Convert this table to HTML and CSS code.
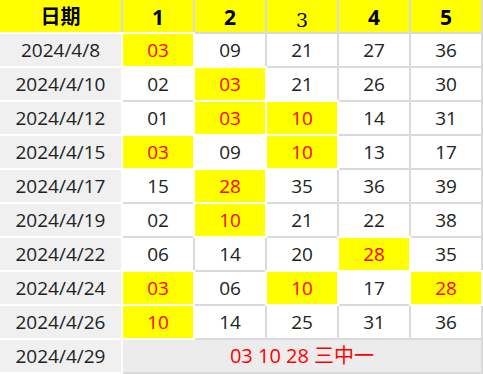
FILE: index.html
```html
<!DOCTYPE html>
<html lang="zh">
<head>
<meta charset="utf-8">
<title>号码记录</title>
<link rel="stylesheet" href="styles.css">
</head>
<body>
<div class="sheet">
  <div class="hd hd-date">日期</div>
  <div class="hd">1</div>
  <div class="hd">2</div>
  <div class="hd hd-odd">3</div>
  <div class="hd">4</div>
  <div class="hd">5</div>

  <div class="date">2024/4/8</div>
  <div class="c hit">03</div><div class="c">09</div><div class="c">21</div><div class="c">27</div><div class="c">36</div>

  <div class="date">2024/4/10</div>
  <div class="c">02</div><div class="c hit">03</div><div class="c">21</div><div class="c">26</div><div class="c">30</div>

  <div class="date">2024/4/12</div>
  <div class="c">01</div><div class="c hit">03</div><div class="c hit">10</div><div class="c">14</div><div class="c">31</div>

  <div class="date">2024/4/15</div>
  <div class="c hit">03</div><div class="c">09</div><div class="c hit">10</div><div class="c">13</div><div class="c">17</div>

  <div class="date">2024/4/17</div>
  <div class="c">15</div><div class="c hit">28</div><div class="c">35</div><div class="c">36</div><div class="c">39</div>

  <div class="date">2024/4/19</div>
  <div class="c">02</div><div class="c hit">10</div><div class="c">21</div><div class="c">22</div><div class="c">38</div>

  <div class="date">2024/4/22</div>
  <div class="c">06</div><div class="c">14</div><div class="c">20</div><div class="c hit">28</div><div class="c">35</div>

  <div class="date">2024/4/24</div>
  <div class="c hit">03</div><div class="c">06</div><div class="c hit">10</div><div class="c">17</div><div class="c hit">28</div>

  <div class="date">2024/4/26</div>
  <div class="c hit">10</div><div class="c">14</div><div class="c">25</div><div class="c">31</div><div class="c">36</div>

  <div class="date">2024/4/29</div>
  <div class="result">03 10 28 三中一</div>
</div>
</body>
</html>
```

FILE: styles.css
```css
html, body {
  margin: 0;
  padding: 0;
  background: #ffffff;
}

.sheet {
  display: grid;
  grid-template-columns: 121px repeat(5, 70px);
  grid-template-rows: repeat(11, 32px);
  gap: 2px;
  padding: 0 2px 2px 0;
  width: 483px;
  box-sizing: border-box;
  background: #dadada;
  font-family: "Open Sans", "Noto Sans CJK SC", sans-serif;
  font-size: 19px;
  color: #222222;
}

.sheet > div {
  display: flex;
  align-items: center;
  justify-content: center;
  line-height: 1;
}

.hd {
  background: #ffff00;
  color: #000000;
  font-weight: 700;
  font-size: 21px;
  padding-top: 2px;
  box-sizing: border-box;
}

.hd-date {
  font-family: "Noto Sans CJK SC", sans-serif;
  font-size: 20px;
  padding-top: 0;
}

.hd-odd {
  font-family: "DejaVu Serif", serif;
  font-weight: 400;
  font-size: 19px;
  padding-top: 8px;
}

.date {
  background: #f0f0f0;
  box-shadow: 0 0 0 2px #ffffff;
}

.c {
  background: #ffffff;
}

.hit {
  background: #ffff00;
  color: #ff0000;
  box-shadow: 0 0 0 2px #ffffff;
}

.result {
  grid-column: 2 / 7;
  background: #ececec;
  color: #ff0000;
  font-size: 20px;
}
```
